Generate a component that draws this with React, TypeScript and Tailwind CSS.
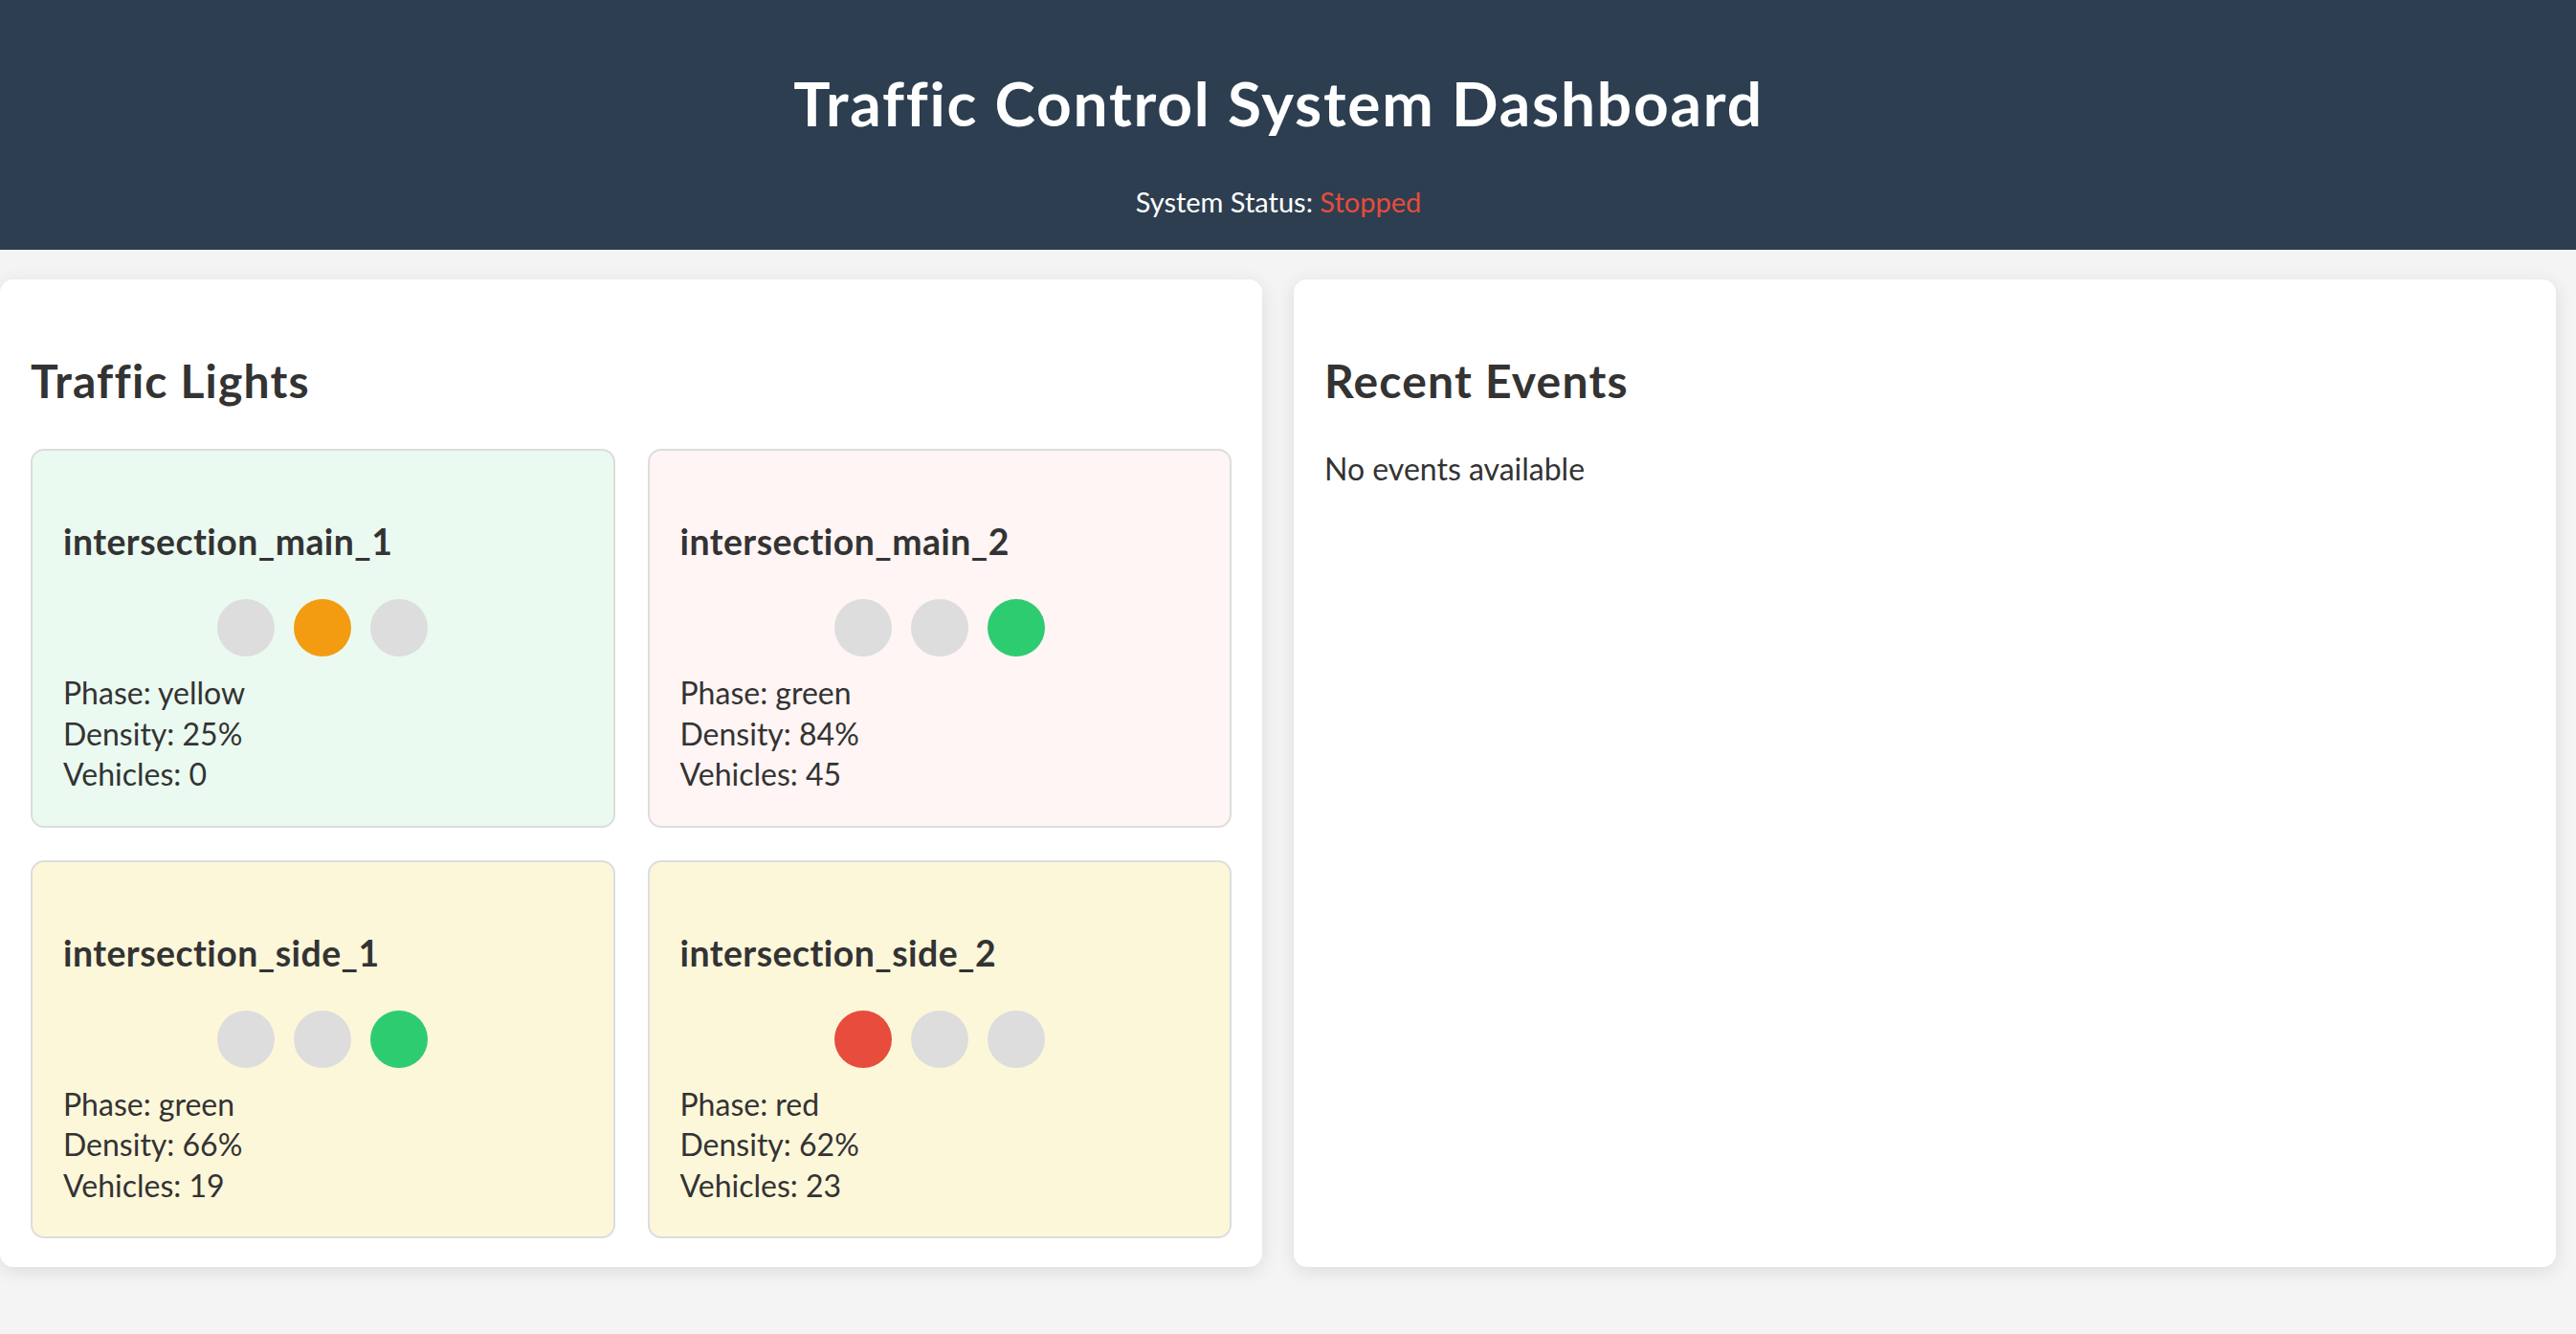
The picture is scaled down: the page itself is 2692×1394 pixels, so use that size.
import React from "react";

type Light = {
  id: string;
  phase: "red" | "yellow" | "green";
  density: number;
  vehicles: number;
  tone: "green" | "red" | "yellow";
};

const lights: Light[] = [
  { id: "intersection_main_1", phase: "yellow", density: 25, vehicles: 0, tone: "green" },
  { id: "intersection_main_2", phase: "green", density: 84, vehicles: 45, tone: "red" },
  { id: "intersection_side_1", phase: "green", density: 66, vehicles: 19, tone: "yellow" },
  { id: "intersection_side_2", phase: "red", density: 62, vehicles: 23, tone: "yellow" },
];

const toneBg = {
  green: "bg-[#eafaf1]",
  red: "bg-[#fef5f4]",
  yellow: "bg-[#fdf7da]",
};

function Bulb({ on, color }: { on: boolean; color: string }) {
  return <div className={`h-[60px] w-[60px] rounded-full ${on ? color : "bg-[#dddddd]"}`} />;
}

function LightCard({ light }: { light: Light }) {
  return (
    <div className={`rounded-[14px] border-2 border-[#dddddd] px-[32px] pb-[32px] pt-[32px] ${toneBg[light.tone]}`}>
      <h3 className="mt-[40px] text-[37.4px] font-bold leading-[45px] tracking-[0.45px]">{light.id}</h3>
      <div className="mt-[38px] flex justify-center gap-[20px]">
        <Bulb on={light.phase === "red"} color="bg-[#e74c3c]" />
        <Bulb on={light.phase === "yellow"} color="bg-[#f39c12]" />
        <Bulb on={light.phase === "green"} color="bg-[#2ecc71]" />
      </div>
      <div className="mt-[17px] text-[32px] leading-[42.5px]">
        <p>Phase: {light.phase}</p>
        <p>Density: {light.density}%</p>
        <p>Vehicles: {light.vehicles}</p>
      </div>
    </div>
  );
}

export default function App() {
  return (
    <div className="min-h-screen bg-[#f4f4f4] text-[#333333] font-['Lato',sans-serif]">
      <header className="h-[261px] bg-[#2c3e50] pr-[20px] pt-[69px] text-center text-white">
        <h1 className="text-[64px] font-bold leading-[77px] tracking-[1.8px]">Traffic Control System Dashboard</h1>
        <p className="mt-[47px] text-[29px] leading-[35px]">
          System Status: <span className="text-[#e74c3c]">Stopped</span>
        </p>
      </header>
      <main className="flex items-stretch gap-[33px] pt-[31px]">
        <section className="w-[1319px] rounded-[14px] bg-white px-[32px] pb-[30px] pt-[32px] shadow-[0_4px_20px_rgba(0,0,0,0.1)]">
          <h2 className="mt-[45px] text-[48px] font-bold leading-[58px] tracking-[1.2px]">Traffic Lights</h2>
          <div className="mt-[42px] grid grid-cols-2 gap-[34px]">
            {lights.map((l) => (
              <LightCard key={l.id} light={l} />
            ))}
          </div>
        </section>
        <section className="w-[1319px] rounded-[14px] bg-white px-[32px] pb-[30px] pt-[32px] shadow-[0_4px_20px_rgba(0,0,0,0.1)]">
          <h2 className="mt-[45px] text-[48px] font-bold leading-[58px] tracking-[1.2px]">Recent Events</h2>
          <p className="mt-[42px] text-[32px] leading-[42.5px]">No events available</p>
        </section>
      </main>
    </div>
  );
}
